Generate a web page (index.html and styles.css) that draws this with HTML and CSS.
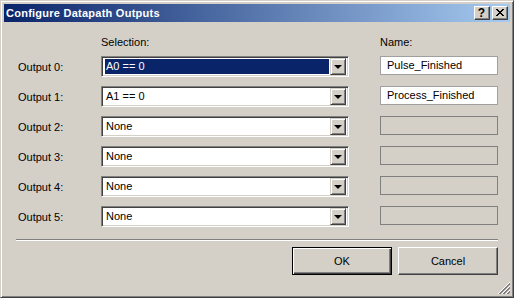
FILE: index.html
```html
<!DOCTYPE html>
<html lang="en">

<head>
    <meta charset="UTF-8">
    <title>Configure Datapath Outputs</title>
    <link rel="stylesheet" href="styles.css">
</head>

<body>
<div class="window">
    <div class="titlebar">
        <span class="title">Configure Datapath Outputs</span>
        <div class="caption-buttons">
            <span class="cap-btn help">?</span>
            <span class="cap-btn close">
                <svg width="8" height="7" viewBox="0 0 8 7" shape-rendering="crispEdges">
                    <path d="M0 0h2v1h-2zM6 0h2v1h-2zM1 1h2v1h-2zM5 1h2v1h-2zM2 2h4v1h-4zM3 3h2v1h-2zM2 4h4v1h-4zM1 5h2v1h-2zM5 5h2v1h-2zM0 6h2v1h-2zM6 6h2v1h-2z" fill="#000"/>
                </svg>
            </span>
        </div>
    </div>

    <div class="content">
        <div class="grid heads">
            <span></span>
            <span>Selection:</span>
            <span>Name:</span>
        </div>

        <div class="grid rows">
            <span class="label">Output 0:</span>
            <div class="combo"><div class="field"><span class="value selected">A0 == 0</span></div><span class="drop"></span></div>
            <div class="textbox">Pulse_Finished</div>

            <span class="label">Output 1:</span>
            <div class="combo"><div class="field"><span class="value">A1 == 0</span></div><span class="drop"></span></div>
            <div class="textbox">Process_Finished</div>

            <span class="label">Output 2:</span>
            <div class="combo"><div class="field"><span class="value">None</span></div><span class="drop"></span></div>
            <div class="textbox disabled"></div>

            <span class="label">Output 3:</span>
            <div class="combo"><div class="field"><span class="value">None</span></div><span class="drop"></span></div>
            <div class="textbox disabled"></div>

            <span class="label">Output 4:</span>
            <div class="combo"><div class="field"><span class="value">None</span></div><span class="drop"></span></div>
            <div class="textbox disabled"></div>

            <span class="label">Output 5:</span>
            <div class="combo"><div class="field"><span class="value">None</span></div><span class="drop"></span></div>
            <div class="textbox disabled"></div>
        </div>

        <div class="separator"></div>

        <div class="actions">
            <button class="btn default">OK</button>
            <button class="btn">Cancel</button>
        </div>
    </div>

    <svg class="grip" width="12" height="12" viewBox="0 0 12 12" shape-rendering="crispEdges">
        <path d="M12 0L0 12M12 4L4 12M12 8L8 12" stroke="#fff"/>
        <path d="M12 1L1 12M12 2L2 12M12 5L5 12M12 6L6 12M12 9L9 12M12 10L10 12" stroke="#808080"/>
    </svg>
</div>
</body>

</html>
```

FILE: styles.css
```css
/* General */
* {
    margin: 0;
    padding: 0;
    box-sizing: border-box;
}

body {
    background-color: #d4d0c8;
    font-family: "Liberation Sans", Arial, sans-serif;
    font-size: 11px;
    color: #000;
}

/* Window frame */
.window {
    position: relative;
    width: 514px;
    height: 298px;
    display: flex;
    flex-direction: column;
    background: #d4d0c8;
    border: 1px solid;
    border-color: #d4d0c8 #404040 #404040 #d4d0c8;
    box-shadow: inset 1px 1px #fff, inset -1px -1px #808080;
    padding: 3px;
}

/* Title bar */
.titlebar {
    height: 18px;
    display: flex;
    align-items: flex-start;
    justify-content: space-between;
    background: linear-gradient(to right, #0a246a, #a6caf0);
}

.title {
    color: #fff;
    font-weight: bold;
    line-height: 18px;
    letter-spacing: 0.25px;
    padding-left: 2px;
}

.caption-buttons {
    display: flex;
    gap: 2px;
    margin: 2px 2px 0 0;
}

.cap-btn {
    width: 16px;
    height: 14px;
    display: flex;
    align-items: center;
    justify-content: center;
    background: #d4d0c8;
    border: 1px solid;
    border-color: #fff #404040 #404040 #fff;
    box-shadow: inset -1px -1px #808080;
}

.help {
    font-weight: bold;
    font-size: 12px;
    line-height: 12px;
    padding-right: 1px;
}

.close svg {
    margin: 0 1px 1px 0;
}

/* Content */
.content {
    flex: 1;
    padding: 14px 12px 0;
}

.grid {
    display: grid;
    grid-template-columns: 85px 279px 118px;
}

.heads {
    line-height: 13px;
    margin-bottom: 7px;
}

.rows {
    row-gap: 9px;
}

.label {
    align-self: center;
    padding-left: 2px;
}

/* Combo box */
.combo {
    width: 248px;
    height: 21px;
    display: flex;
    background: #fff;
    border: 1px solid;
    border-color: #808080 #fff #fff #808080;
    box-shadow: inset 1px 1px #404040, inset -1px -1px #d4d0c8;
    padding: 2px 2px 2px 1px;
}

.field {
    flex: 1;
    padding: 0 1px 0 1px;
    margin-left: 1px;
}

.value {
    display: block;
    height: 15px;
    line-height: 15px;
    padding-left: 1px;
}

.value.selected {
    background: #0a246a;
    color: #fff;
}

.drop {
    width: 16px;
    margin: -1px 0 -1px 0;
    position: relative;
    background: #d4d0c8;
    border: 1px solid;
    border-color: #d4d0c8 #404040 #404040 #d4d0c8;
    box-shadow: inset 1px 1px #fff, inset -1px -1px #808080;
}

.drop::after {
    content: "";
    position: absolute;
    left: 3px;
    top: 6px;
    border-style: solid;
    border-width: 4px 4px 0;
    border-color: #000 transparent transparent;
}

/* Text box */
.textbox {
    align-self: start;
    height: 19px;
    line-height: 17px;
    padding-left: 6px;
    background: #fff;
    border: 1px solid #a0a0a0;
}

.textbox.disabled {
    background: #d4d0c8;
    border-color: #808080;
}

/* Separator and buttons */
.separator {
    margin-top: 12px;
    height: 2px;
    border-top: 1px solid #808080;
    border-bottom: 1px solid #fff;
}

.actions {
    display: flex;
    justify-content: flex-end;
    gap: 6px;
    margin-top: 6px;
}

.btn {
    width: 100px;
    height: 28px;
    font-family: "Liberation Sans", Arial, sans-serif;
    font-size: 11px;
    color: #000;
    background: #d4d0c8;
    border: 1px solid;
    border-color: #fff #404040 #404040 #fff;
    box-shadow: inset -1px -1px #808080;
}

.btn.default {
    border: 1px solid #000;
    box-shadow: inset 1px 1px #fff, inset -1px -1px #404040, inset -2px -2px #808080;
}

/* Resize grip */
.grip {
    position: absolute;
    right: 3px;
    bottom: 3px;
}
```
